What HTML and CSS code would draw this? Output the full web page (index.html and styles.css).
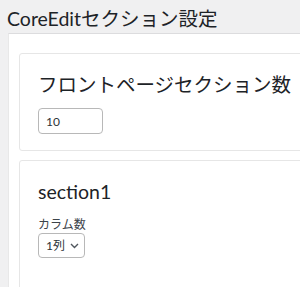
FILE: index.html
```html
<!DOCTYPE html>
<html lang="ja">
<head>
  <meta charset="UTF-8" />
  <meta name="viewport" content="width=device-width, initial-scale=1.0" />
  <title>CoreEditセクション設定</title>
  <link rel="stylesheet" href="styles.css">
</head>
<body>
  <h1>CoreEditセクション設定</h1>
  <div class="panel">
    <div class="card">
      <h2>フロントページセクション数</h2>
      <input type="number" class="num-input" value="10" />
    </div>

    <div class="card section-card">
      <h2>section1</h2>
      <label class="field-label" for="cols1">カラム数</label>
      <div class="select-wrap">
        <select id="cols1" class="select">
          <option>1列</option>
          <option>2列</option>
          <option>3列</option>
        </select>
        <svg class="chevron" width="9" height="6" viewBox="0 0 9 6">
          <path d="M1 1l3.5 3.5L8 1" fill="none" stroke="#50575e" stroke-width="1.4" />
        </svg>
      </div>
    </div>
  </div>
</body>
</html>
```

FILE: styles.css
```css
body {
  margin: 0;
  background: #f0f0f1;
  font-family: Lato, "Noto Sans CJK JP", sans-serif;
  color: #1d2327;
  overflow: hidden;
}
h1 {
  font-size: 19.5px;
  font-weight: 400;
  line-height: 26px;
  margin: 6px 0 0 7px;
  height: 27px;
}
.panel {
  width: 420px;
  margin-left: 8px;
  background: #fff;
  border-top: 1px solid #dcdcde;
  border-left: 1px solid #e8e8e8;
  padding: 19px 0 0 10px;
  min-height: 260px;
}
.card {
  border: 1px solid #e6e6e6;
  border-radius: 3px;
  padding: 18px 18px 16px;
  margin-bottom: 9px;
}
.section-card {
  padding-bottom: 60px;
}
h2 {
  font-size: 19.5px;
  font-weight: 400;
  line-height: 26px;
  margin: 0 0 10px;
}
.num-input {
  box-sizing: border-box;
  width: 65px;
  height: 26px;
  padding: 0 7px;
  border: 1px solid #b8b8b8;
  border-radius: 4px;
  font-family: inherit;
  font-size: 12px;
  color: #2c3338;
  -moz-appearance: textfield;
}
.num-input::-webkit-inner-spin-button,
.num-input::-webkit-outer-spin-button {
  -webkit-appearance: none;
  margin: 0;
}
.field-label {
  display: block;
  font-size: 12px;
  line-height: 17px;
  margin-top: 11px;
  color: #3c434a;
}
.select-wrap {
  position: relative;
  display: inline-block;
  vertical-align: top;
}
.select {
  display: block;
  box-sizing: border-box;
  width: 47px;
  height: 25px;
  padding: 0 0 0 7px;
  border: 1px solid #b8b8b8;
  border-radius: 4px;
  background: #fff;
  font-family: inherit;
  font-size: 12px;
  color: #2c3338;
  appearance: none;
  -webkit-appearance: none;
}
.chevron {
  position: absolute;
  right: 6px;
  top: 10px;
  pointer-events: none;
}
```
